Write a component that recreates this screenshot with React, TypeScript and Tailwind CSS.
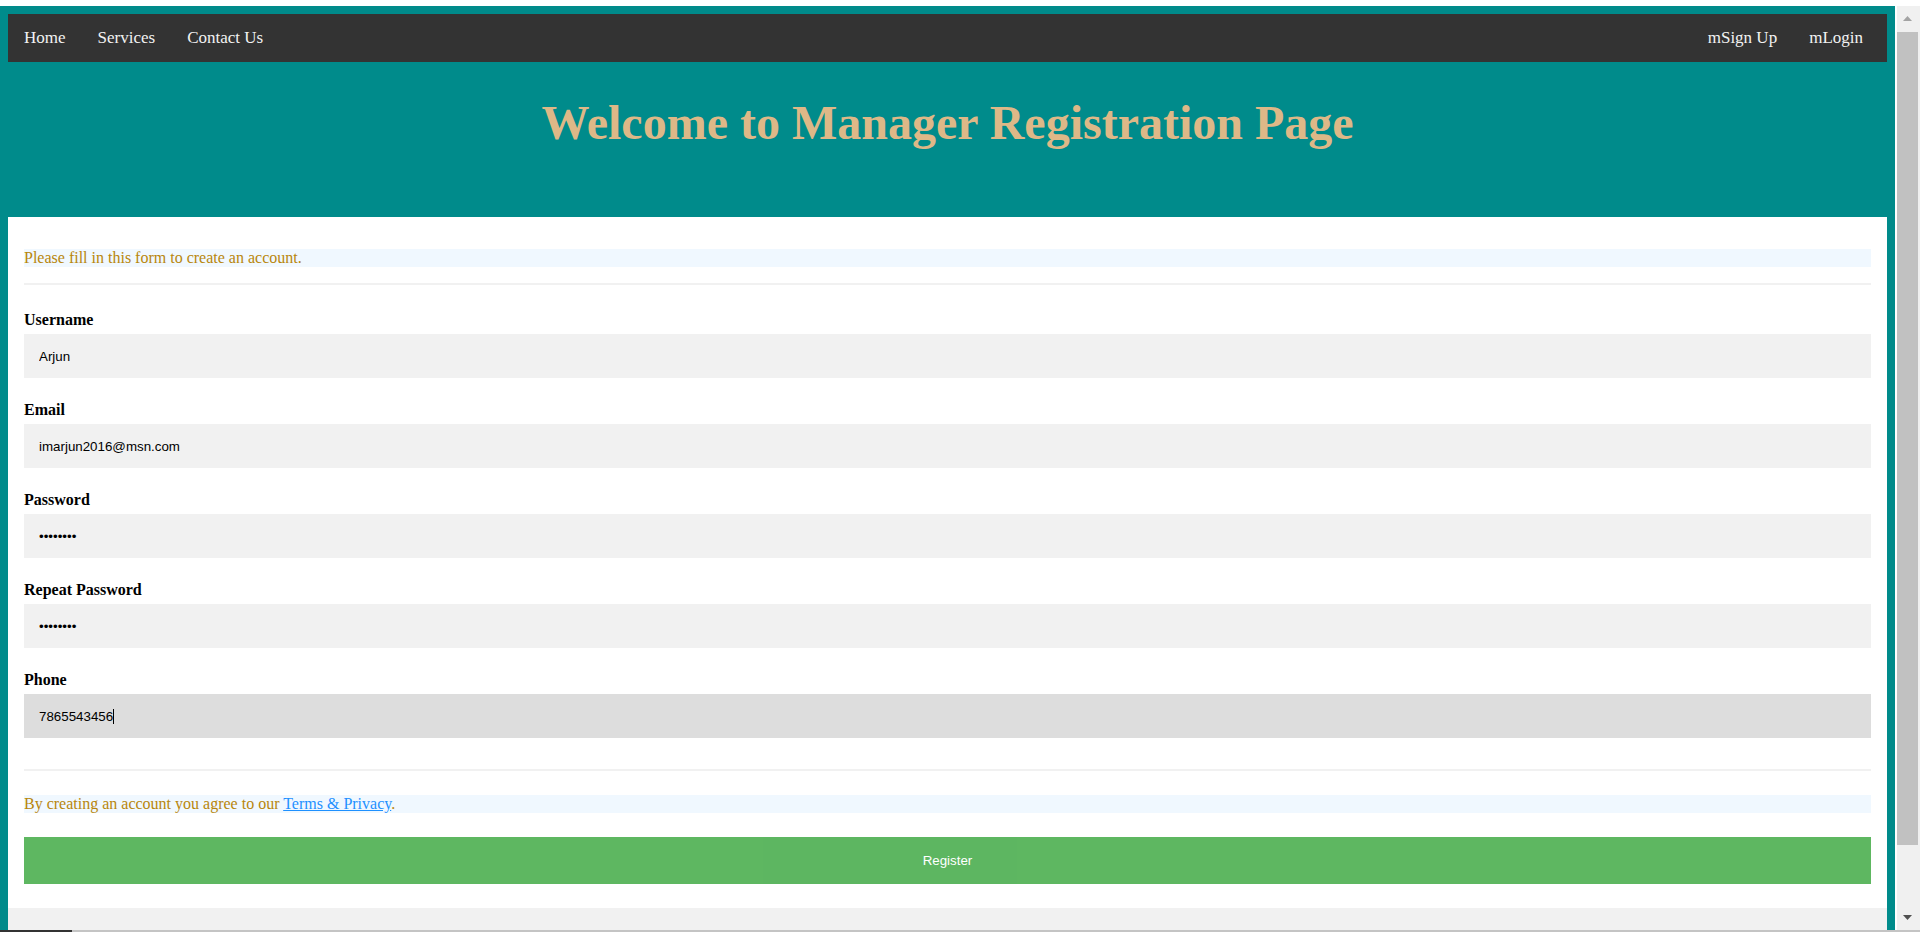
import React from "react";

const fields = [
  { label: "Username", type: "text", value: "Arjun" },
  { label: "Email", type: "text", value: "imarjun2016@msn.com" },
  { label: "Password", type: "password", value: "12345678" },
  { label: "Repeat Password", type: "password", value: "12345678" },
];

function Field({ label, type, value }: { label: string; type: string; value: string }) {
  return (
    <>
      <label className="block font-bold leading-[19px] text-black">{label}</label>
      <input
        type={type}
        defaultValue={value}
        readOnly
        className="block w-full h-[44px] mt-[5px] mb-[22px] px-[15px] bg-[#f1f1f1] text-black text-[13.33px] font-['Liberation_Sans',Arial,sans-serif] outline-none border-0"
      />
    </>
  );
}

function Scrollbar() {
  return (
    <div className="w-[25px] flex flex-col bg-[#f0f0f0] border-l-2 border-white pr-[2px]">
      <div className="h-[25px] flex items-center justify-center">
        <svg width="9" height="5" viewBox="0 0 9 5">
          <path d="M0 5 L4.5 0 L9 5 Z" fill="#a3a3a3" />
        </svg>
      </div>
      <div className="h-[813px] mt-[1px] bg-[#c1c1c1]" />
      <div className="flex-1" />
      <div className="h-[25px] flex items-center justify-center">
        <svg width="9" height="5" viewBox="0 0 9 5">
          <path d="M0 0 L4.5 5 L9 0 Z" fill="#505050" />
        </svg>
      </div>
    </div>
  );
}

export default function App() {
  return (
    <div className="h-[932px] w-full overflow-hidden flex flex-col bg-white font-['Liberation_Serif','Times_New_Roman',serif] text-[16px]">
      <div className="h-[6px] bg-white" />

      <div className="flex flex-1 min-h-0">
        <div className="flex-1 min-w-0 bg-[#008b8b] px-2 pt-2 overflow-hidden">
          {/* Top nav */}
          <nav className="h-[48px] bg-[#333] flex justify-between text-[17px] text-[#f2f2f2] leading-[20px]">
            <div className="flex">
              <a className="px-4 py-[14px]">Home</a>
              <a className="px-4 py-[14px]">Services</a>
              <a className="px-4 py-[14px]">Contact Us</a>
            </div>
            <div className="flex pr-2">
              <a className="px-4 py-[14px]">mSign Up</a>
              <a className="px-4 py-[14px]">mLogin</a>
            </div>
          </nav>

          {/* Header */}
          <div className="h-[155px] pt-[34px]">
            <h1 className="text-center text-[48px] font-bold leading-[53px] text-[#deb887]">
              Welcome to Manager Registration Page
            </h1>
          </div>

          {/* Form */}
          <div className="bg-white p-4">
            <p className="mt-4 mb-4 leading-[18px] bg-[#f0f8ff] text-[#b8860b]">
              Please fill in this form to create an account.
            </p>
            <hr className="border-0 h-[2px] bg-[#f1f1f1] mb-[25px]" />

            {fields.map((f) => (
              <Field key={f.label} {...f} />
            ))}

            <label className="block font-bold leading-[19px] text-black">Phone</label>
            <div className="relative mt-[5px] mb-[22px]">
              <input
                type="text"
                defaultValue="7865543456"
                readOnly
                className="block w-full h-[44px] px-[15px] bg-[#dddddd] text-black text-[13.33px] font-['Liberation_Sans',Arial,sans-serif] outline-none border-0"
              />
              <span className="absolute left-[89px] top-[15px] h-[15px] w-px bg-black" />
            </div>

            <hr className="border-0 h-[2px] bg-[#f1f1f1] mt-[31px] mb-6" />
            <p className="mb-6 leading-[18px] bg-[#f0f8ff] text-[#b8860b]">
              By creating an account you agree to our{" "}
              <a className="text-[#1e90ff] underline">Terms &amp; Privacy</a>.
            </p>

            <button className="block w-full h-[47px] mb-2 bg-[#4caf50] opacity-90 text-white text-[13.33px] font-['Liberation_Sans',Arial,sans-serif]">
              Register
            </button>
          </div>

          <div className="h-[60px] bg-[#f1f1f1]" />
        </div>

        <Scrollbar />
      </div>

      <div className="h-[2px] flex">
        <div className="w-[72px] bg-[#333]" />
        <div className="flex-1 bg-[#c4c4c4]" />
      </div>
    </div>
  );
}
